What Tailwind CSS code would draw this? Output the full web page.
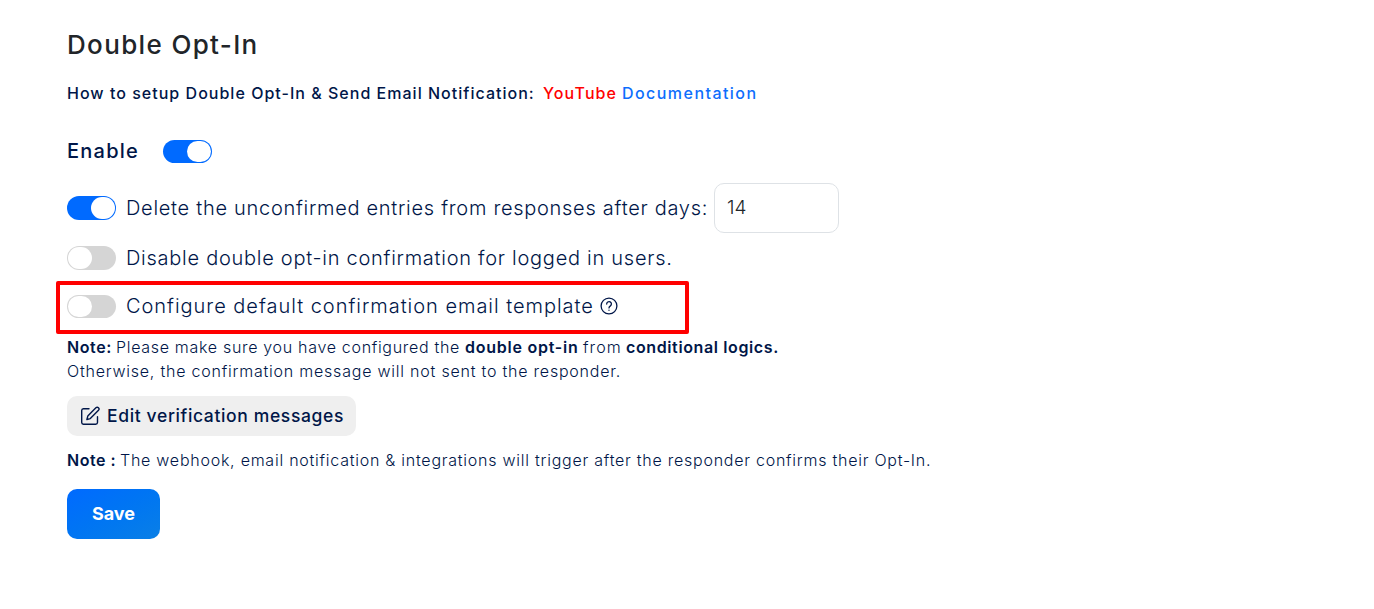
<!DOCTYPE html>
<html lang="en">
<head>
<meta charset="utf-8">
<title>Double Opt-In</title>
<script src="https://cdn.jsdelivr.net/npm/@tailwindcss/browser@4"></script>
</head>
<body class="bg-white font-['Inter',sans-serif] text-[#001648]">
<main class="flex h-[609px] flex-col items-start overflow-hidden pt-[29px] pl-[67px] whitespace-nowrap">
  <h1 class="text-[26px] leading-8 font-medium tracking-[1.35px] text-[#212529]">Double Opt-In</h1>

  <p class="mt-5 flex text-base font-medium">
    <span class="w-[476px] tracking-[1.02px]">How to setup Double Opt-In &amp; Send Email Notification:</span>
    <a class="w-[79px] tracking-[1.1px] text-[#ff0000]">YouTube</a>
    <a class="tracking-[1.45px] text-[#0d6efd]">Documentation</a>
  </p>

  <div class="mt-[34px] flex h-6 items-center">
    <span class="w-24 text-xl font-medium tracking-[1.25px]">Enable</span>
    <span class="flex h-[23px] w-[49px] items-center justify-end rounded-full bg-[#006aff] pr-px"><span class="h-[21px] w-6 rounded-full bg-white"></span></span>
  </div>

  <div class="mt-5 flex h-[50px] items-center">
    <span class="flex h-6 w-[49px] items-center justify-end rounded-full bg-[#006aff] pr-px"><span class="h-[22px] w-6 rounded-full bg-white"></span></span>
    <span class="ml-2.5 w-[588px] text-xl font-light tracking-[0.71px]">Delete the unconfirmed entries from responses after days:</span>
    <span class="flex h-[50px] w-[125px] items-center rounded-[10px] border border-[#dee2e6] pl-3 text-[19px] font-light text-[#212529]">14</span>
  </div>

  <div class="mt-[13px] flex h-6 items-center">
    <span class="flex h-6 w-[49px] items-center rounded-full bg-[#d5d5d5] pl-px"><span class="h-[22px] w-6 rounded-full bg-white"></span></span>
    <span class="ml-2.5 text-xl font-light tracking-[0.73px]">Disable double opt-in confirmation for logged in users.</span>
  </div>

  <div class="mt-[11px] -ml-[11.5px] flex h-[53px] w-[633px] items-center rounded-[2px] border-4 border-[#ff0000] pb-[3px] pl-[7.5px]">
    <span class="flex h-[23px] w-[49px] items-center rounded-full bg-[#d5d5d5] pl-px"><span class="h-[21px] w-6 rounded-full bg-white"></span></span>
    <span class="ml-2.5 w-[474px] text-xl font-light tracking-[0.97px]">Configure default confirmation email template</span>
    <svg class="size-[18px]" viewBox="0 0 18 18" fill="none" stroke="#001648" stroke-width="1.3" stroke-linecap="round" stroke-linejoin="round"><circle cx="9" cy="9" r="7.9"/><path d="M6.7 7a2.35 2.35 0 1 1 3.7 1.9C9.5 9.5 9 9.9 9 10.9M9 13.2v.1"/></svg>
  </div>

  <p class="mt-px flex text-base font-light">
    <b class="w-[49px] font-semibold tracking-[0.6px]">Note:</b>
    <span class="w-[349px] tracking-[0.69px]">Please make sure you have configured the</span>
    <b class="w-[118px] font-semibold tracking-[0.75px]">double opt-in</b>
    <span class="w-[43px] tracking-[1.1px]">from</span>
    <b class="font-semibold tracking-[0.62px]">conditional logics.</b>
  </p>
  <p class="text-base font-light tracking-[0.78px]">Otherwise, the confirmation message will not sent to the responder.</p>

  <button class="mt-[13px] flex h-10 w-[289px] items-center rounded-[10px] bg-[#efefef] pl-[13px] text-[17.5px] font-medium">
    <svg class="size-5" viewBox="0 0 20 20" fill="none" stroke="#001648" stroke-width="1.4" stroke-linecap="round" stroke-linejoin="round"><path d="M9 2.7H3.4A1.8 1.8 0 0 0 1.7 4.5v12A1.8 1.8 0 0 0 3.4 18.2h12.3a1.8 1.8 0 0 0 1.8-1.7v-5.7"/><path d="M15.9 1.8a1.75 1.75 0 0 1 2.6 2.5L10.3 12.6l-3.4.9.9-3.4z"/></svg>
    <span class="ml-[7px] tracking-[0.64px]">Edit verification messages</span>
  </button>

  <p class="mt-3 flex text-base font-light">
    <b class="w-[53px] font-semibold tracking-[0.5px]">Note :</b>
    <span class="tracking-[0.75px]">The webhook, email notification &amp; integrations will trigger after the responder confirms their Opt-In.</span>
  </p>

  <button class="mt-[17px] flex h-[50px] w-[93px] items-center justify-center rounded-[10px] bg-linear-to-br from-[#006aff] to-[#0a7fe6] text-lg font-bold text-white">Save</button>
</main>
</body>
</html>
